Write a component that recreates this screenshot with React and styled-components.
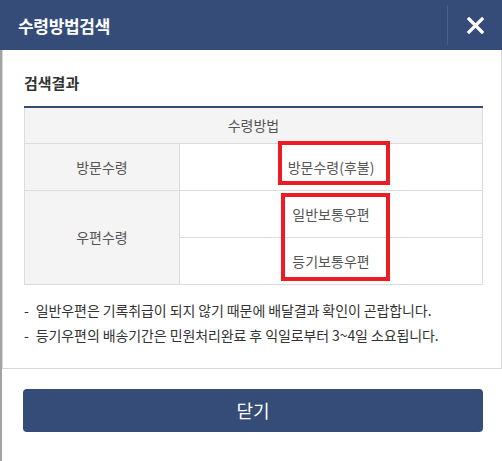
import React from 'react';
import styled, { createGlobalStyle } from 'styled-components';

const GlobalStyle = createGlobalStyle`
  * { box-sizing: border-box; }
  html, body { margin: 0; padding: 0; background: #fff; }
  body {
    font-family: "Noto Sans CJK KR", "Noto Sans", sans-serif;
    color: #333;
  }
`;

const rows = [
  { label: '방문수령', items: ['방문수령(후불)'] },
  { label: '우편수령', items: ['일반보통우편', '등기보통우편'] },
];

const notes = [
  '일반우편은 기록취급이 되지 않기 때문에 배달결과 확인이 곤랍합니다.',
  '등기우편의 배송기간은 민원처리완료 후 익일로부터 3~4일 소요됩니다.',
];

function App() {
  return (
    <>
      <GlobalStyle />
      <Popup>
        <Header>
          <Title>수령방법검색</Title>
          <CloseBtn aria-label="닫기">
            <svg width="17" height="17" viewBox="0 0 17 17">
              <path d="M2 2 L15 15 M15 2 L2 15" stroke="#fff" strokeWidth="3.2" strokeLinecap="square" />
            </svg>
          </CloseBtn>
        </Header>
        <Body>
          <Content>
            <SectionTitle>검색결과</SectionTitle>
            <TableWrap>
              <Table>
                <thead>
                  <tr>
                    <Th colSpan={2}>수령방법</Th>
                  </tr>
                </thead>
                <tbody>
                  {rows.map((row) =>
                    row.items.map((item, i) => (
                      <tr key={item}>
                        {i === 0 && <LabelCell rowSpan={row.items.length}>{row.label}</LabelCell>}
                        <ValueCell>{item}</ValueCell>
                      </tr>
                    ))
                  )}
                </tbody>
              </Table>
              <Mark $top={35} $left={254} $width={112} $height={44} />
              <Mark $top={87} $left={257} $width={109} $height={88} />
            </TableWrap>
            <NoteList>
              {notes.map((n) => (
                <Note key={n}>{n}</Note>
              ))}
            </NoteList>
          </Content>
          <Footer>
            <Button>닫기</Button>
          </Footer>
        </Body>
      </Popup>
    </>
  );
}

const Popup = styled.div`
  width: 502px;
  height: 461px;
  display: flex;
  flex-direction: column;
  overflow: hidden;
`;

const Header = styled.header`
  height: 50px;
  flex-shrink: 0;
  background: #354c78;
  display: flex;
  align-items: center;
  justify-content: space-between;
  padding-left: 18px;
`;

const Title = styled.h1`
  margin: 0;
  font-size: 17px;
  font-weight: 700;
  letter-spacing: -0.3px;
  color: #fff;
`;

const CloseBtn = styled.button`
  width: 55px;
  height: 40px;
  border: 0;
  border-left: 1px solid #4b6089;
  background: transparent;
  padding: 0 0 0 1px;
  display: flex;
  align-items: center;
  justify-content: center;
  cursor: pointer;
`;

const Body = styled.div`
  flex: 1;
  border-left: 2px solid #a3a3a3;
`;

const Content = styled.section`
  border: 1px solid #d6d6d6;
  border-top: 0;
  padding: 22px 18px 20px 21px;
`;

const SectionTitle = styled.h2`
  margin: 0 0 12px;
  height: 22px;
  line-height: 22px;
  font-size: 15px;
  font-weight: 700;
  color: #333;
`;

const TableWrap = styled.div`
  position: relative;
`;

const Table = styled.table`
  width: 100%;
  border-collapse: collapse;
  border-top: 2px solid #354c78;
  font-size: 14px;
  color: #555;
`;

const Th = styled.th`
  height: 36px;
  padding: 0;
  font-weight: 400;
  background: #f4f4f4;
  border: 1px solid #dcdcdc;
  border-top: 0;
`;

const LabelCell = styled.td`
  width: 155px;
  padding: 0;
  text-align: center;
  background: #f4f4f4;
  border: 1px solid #dcdcdc;
`;

const ValueCell = styled.td`
  height: 47px;
  padding: 0;
  text-align: center;
  border: 1px solid #dcdcdc;
`;

const Mark = styled.div`
  position: absolute;
  top: ${(p) => p.$top}px;
  left: ${(p) => p.$left}px;
  width: ${(p) => p.$width}px;
  height: ${(p) => p.$height}px;
  border: 4px solid #ed1c24;
  pointer-events: none;
`;

const NoteList = styled.ul`
  list-style: none;
  margin: 13px 0 0;
  padding: 0;
`;

const Note = styled.li`
  font-size: 14px;
  line-height: 25px;
  color: #333;
  letter-spacing: -0.1px;

  &::before {
    content: '-';
    margin-right: 7px;
  }
`;

const Footer = styled.div`
  padding: 20px 19px 0 21px;
`;

const Button = styled.button`
  width: 100%;
  height: 43px;
  border: 0;
  border-radius: 4px;
  background: #354c78;
  color: #fff;
  font-family: inherit;
  font-size: 18px;
  cursor: pointer;
`;

export default App;
